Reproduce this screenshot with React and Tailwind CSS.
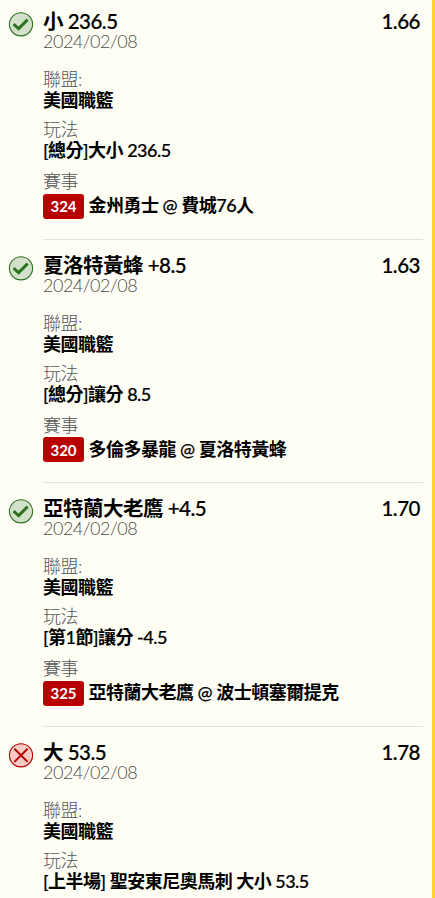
const bets = [
  { won: true, pick: '小 236.5', odds: '1.66', date: '2024/02/08', play: ['總分', '大小 236.5'], code: '324', match: '金州勇士 @ 費城76人' },
  { won: true, pick: '夏洛特黃蜂 +8.5', odds: '1.63', date: '2024/02/08', play: ['總分', '讓分 8.5'], code: '320', match: '多倫多暴龍 @ 夏洛特黃蜂' },
  { won: true, pick: '亞特蘭大老鷹 +4.5', odds: '1.70', date: '2024/02/08', play: ['第1節', '讓分 -4.5'], code: '325', match: '亞特蘭大老鷹 @ 波士頓塞爾提克' },
  { won: false, pick: '大 53.5', odds: '1.78', date: '2024/02/08', play: ['上半場', ' 聖安東尼奧馬刺 大小 53.5'] },
];

// Latin runs are set lighter than the Chinese ones
const Mixed = ({ text }) =>
  text.split(/([\u4e00-\u9fff]+)/).map((part, i) => (
    <span key={i} className={i % 2 ? 'font-bold' : 'font-medium [-webkit-text-stroke:0.2px_black]'}>{part}</span>
  ));

const StatusIcon = ({ won }) => (
  <svg className="mt-[11px] ml-2 h-[26px] w-[26px] shrink-0" viewBox="0 0 26 26" fill="none">
    <circle cx="13" cy="13.3" r="11.6" fill={won ? '#d4e1ca' : '#f5cbc5'} stroke={won ? '#2c7422' : '#b80000'} strokeWidth="1.1" />
    {won ? (
      <path d="M5.6 13.2L10.6 17.6L19.6 8.6" stroke="#2c7422" strokeWidth="3" />
    ) : (
      <path d="M6.4 6.7L19.6 19.9M19.6 6.7L6.4 19.9" stroke="#b80000" strokeWidth="2" />
    )}
  </svg>
);

const BetRow = ({ bet }) => (
  <div className="flex h-[243.6px] pb-1">
    <StatusIcon won={bet.won} />
    <div className="mr-[9px] ml-[9px] flex-1 border-b border-[#e3e2dc] pt-[10px] text-[18px] leading-5 tracking-[-0.5px] whitespace-nowrap">
      <div className="flex h-[23px] justify-between pr-[3px] text-[20.5px] leading-[23px]">
        <span><Mixed text={bet.pick} /></span>
        <span><Mixed text={bet.odds} /></span>
      </div>
      <div className="h-[16px] leading-[16px] font-light text-[#4d4d4d]">{bet.date}</div>

      <div className="mt-[20px] h-5 font-light text-[#555]">聯盟:</div>
      <div className="h-5 leading-[22px]"><Mixed text="美國職籃" /></div>

      <div className="mt-[10px] h-5 font-light text-[#555]">玩法</div>
      <div className="mt-px h-5">
        <Mixed text={`[${bet.play[0]}]${bet.play[1]}`} />
      </div>

      {bet.match && (
        <>
          <div className="mt-[11px] h-5 font-light text-[#555]">賽事</div>
          <div className="mt-[2.6px] flex items-center">
            <span className="flex h-[25px] w-[41px] items-center justify-center rounded-[3px] bg-[#b80000] text-[15px] font-bold tracking-normal text-white">
              {bet.code}
            </span>
            <span className="mb-[2px] ml-[4.5px]"><Mixed text={bet.match} /></span>
          </div>
        </>
      )}
    </div>
  </div>
);

export default function App() {
  return (
    <div className="h-[898px] w-[435px] overflow-hidden border-r-[3px] border-[#ffd12e] bg-[#fffef5] font-['Lato','Noto_Sans_CJK_TC',sans-serif] text-black">
      {bets.map((bet, i) => (
        <BetRow key={i} bet={bet} />
      ))}
    </div>
  );
}
